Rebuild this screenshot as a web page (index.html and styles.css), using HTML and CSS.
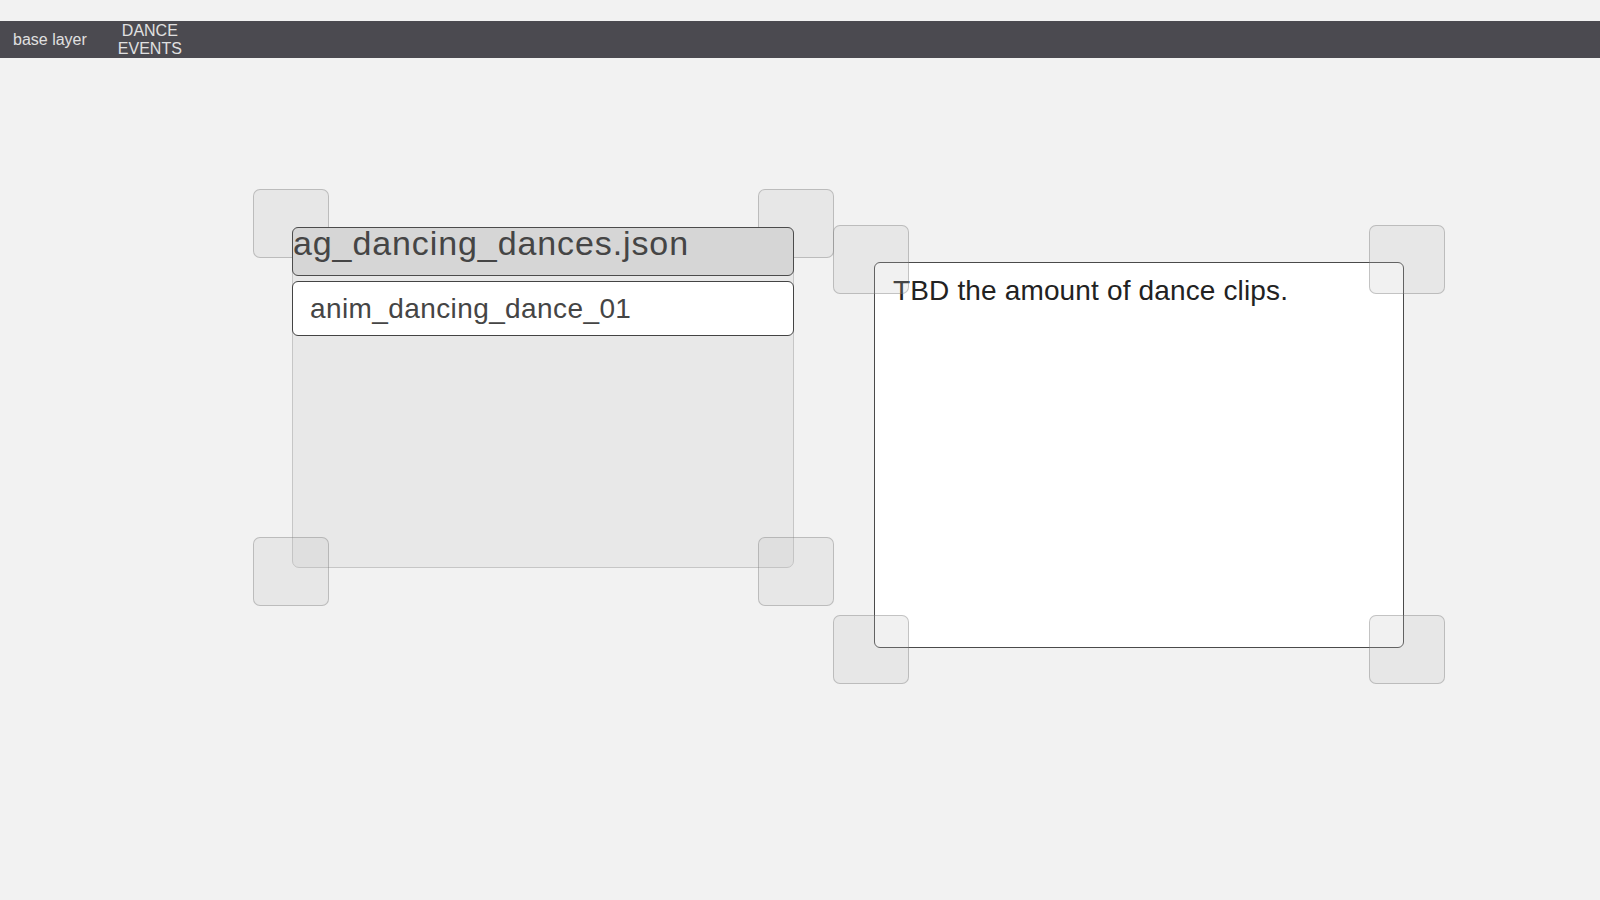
FILE: index.html
```html
<!DOCTYPE html>
<html>
<head>
<meta charset="utf-8">
<link rel="stylesheet" href="styles.css">
</head>
<body>
<div class="topbar">
  <div class="tab tab-first">base layer</div>
  <div class="tab tab-two">DANCE<br>EVENTS</div>
</div>
<div class="workspace">
  <div class="list-panel">
    <div class="handle h-tl"></div>
    <div class="handle h-tr"></div>
    <div class="handle h-bl"></div>
    <div class="handle h-br"></div>
    <div class="list-header"><span class="header-text">ag_dancing_dances.json</span></div>
    <div class="list-item">anim_dancing_dance_01</div>
  </div>
  <div class="note-panel">
    <div class="note-text">TBD the amount of dance clips.</div>
    <div class="handle n-tl"></div>
    <div class="handle n-tr"></div>
    <div class="handle n-bl"></div>
    <div class="handle n-br"></div>
  </div>
</div>
</body>
</html>
```
FILE: styles.css
```css
html, body {
  margin: 0;
  padding: 0;
  background: #f2f2f2;
  font-family: "Liberation Sans", Arial, sans-serif;
  height: 100%;
}

.topbar {
  margin-top: 21px;
  height: 37px;
  background: #4b4a50;
  display: flex;
  align-items: center;
  color: #e0e0e0;
  font-size: 16px;
}

.tab {
  line-height: 17.4px;
  text-align: center;
}

.tab-first {
  padding-left: 13px;
}

.tab-two {
  margin-left: 31px;
}

.workspace {
  display: flex;
  align-items: flex-start;
  padding-left: 292px;
  gap: 80px;
}

.list-panel {
  position: relative;
  margin-top: 169px;
  width: 502px;
  height: 341px;
  box-sizing: border-box;
  background: #e8e8e8;
  border: 1px solid #c6c6c6;
  border-radius: 7px;
  display: flex;
  flex-direction: column;
  gap: 5px;
}

.list-header {
  position: relative;
  z-index: 2;
  margin: -1px -1px 0 -1px;
  height: 49px;
  box-sizing: border-box;
  background: #d6d6d6;
  border: 1px solid #4c4c4c;
  border-radius: 6px;
  color: #454545;
  font-size: 34px;
  letter-spacing: 0.9px;
  line-height: 38px;
  white-space: nowrap;
}

.header-text {
  display: block;
  margin-top: -4px;
}

.list-item {
  position: relative;
  z-index: 2;
  margin: 0 -1px;
  height: 55px;
  box-sizing: border-box;
  background: #ffffff;
  border: 1px solid #444444;
  border-radius: 6px;
  color: #454545;
  font-size: 28px;
  letter-spacing: 0.4px;
  padding-left: 17px;
  display: flex;
  align-items: center;
  white-space: nowrap;
}

.note-panel {
  position: relative;
  margin-top: 204px;
  width: 530px;
  height: 386px;
  box-sizing: border-box;
  background: #ffffff;
  border: 1px solid #4a4a4a;
  border-radius: 6px;
}

.note-text {
  padding: 12px 18px;
  font-size: 28px;
  color: #222222;
  letter-spacing: 0.15px;
  white-space: nowrap;
}

.handle {
  position: absolute;
  z-index: 1;
  width: 76px;
  height: 69px;
  box-sizing: border-box;
  background: rgba(190, 190, 190, 0.22);
  border: 1px solid rgba(100, 100, 100, 0.32);
  border-radius: 7px;
}

.h-tl { left: -40px; top: -39px; }
.h-tr { right: -41px; top: -39px; }
.h-bl { left: -40px; bottom: -39px; }
.h-br { right: -41px; bottom: -39px; }

.n-tl { left: -42px; top: -38px; }
.n-tr { right: -42px; top: -38px; }
.n-bl { left: -42px; bottom: -37px; }
.n-br { right: -42px; bottom: -37px; }
```
